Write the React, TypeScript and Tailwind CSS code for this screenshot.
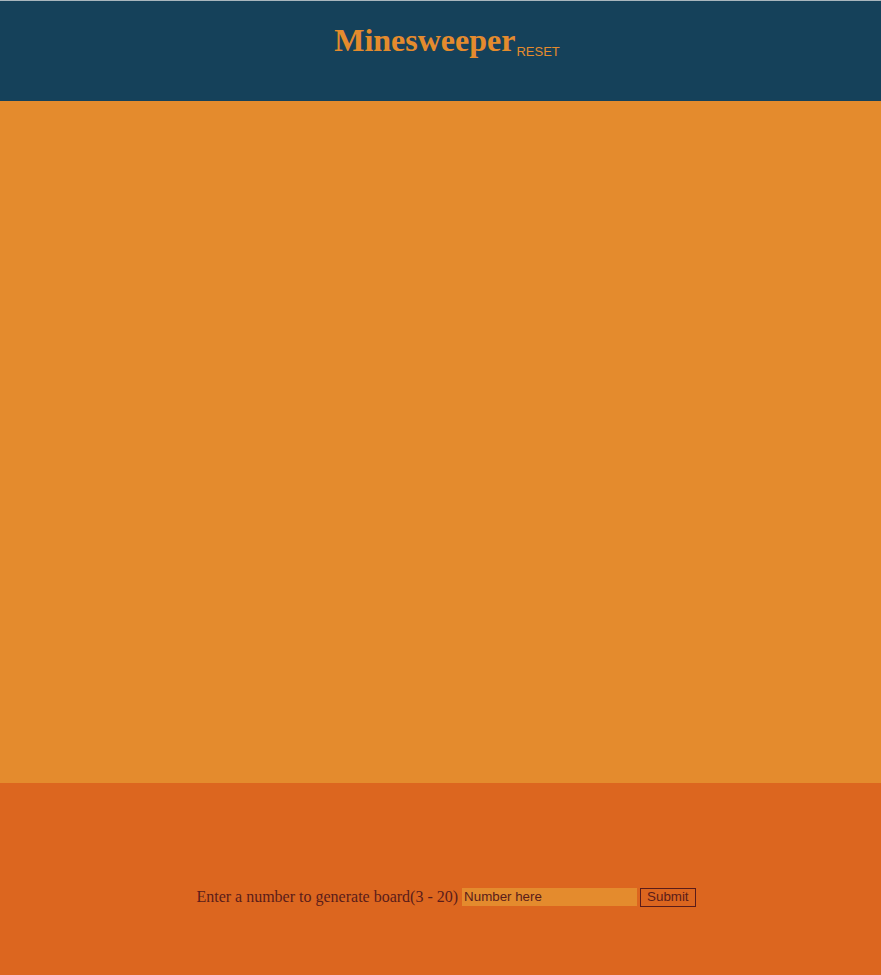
export default function App() {
  return (
    <div className="min-h-screen flex flex-col">
      <header className="h-[101px] bg-[#15415a] border-t border-[#a9b6bd] flex justify-center pt-[20px] pl-[13px]">
        <h1 className="text-[#e48b2d] font-bold text-[32px] leading-[38px] font-['Liberation_Serif',serif]">
          Minesweeper
          <sub className="ml-[1px] font-normal text-[13px] font-['Liberation_Sans',sans-serif] align-[-2px]">RESET</sub>
        </h1>
      </header>

      {/* board area */}
      <main className="h-[682px] bg-[#e48b2d]" />

      <footer className="h-[192px] bg-[#dc661f] flex justify-center items-start pt-[102px] pl-[11px]">
        <form
          className="flex items-center text-[#5a1c1a] font-['Liberation_Serif',serif] text-[16px]"
          onSubmit={(e) => e.preventDefault()}
        >
          <span>Enter a number to generate board(3 - 20)</span>
          <input
            type="text"
            placeholder="Number here"
            className="ml-[4px] w-[175px] h-[18px] bg-[#e48b2d] px-[2px] text-[13.33px] font-['Liberation_Sans',sans-serif] placeholder:text-[#5a1c1a] outline-none"
          />
          <button
            type="submit"
            className="ml-[3px] h-[19px] px-[6px] border border-[#5a1c1a] text-[13.33px] leading-[16px] font-['Liberation_Sans',sans-serif]"
          >
            Submit
          </button>
        </form>
      </footer>
    </div>
  );
}
